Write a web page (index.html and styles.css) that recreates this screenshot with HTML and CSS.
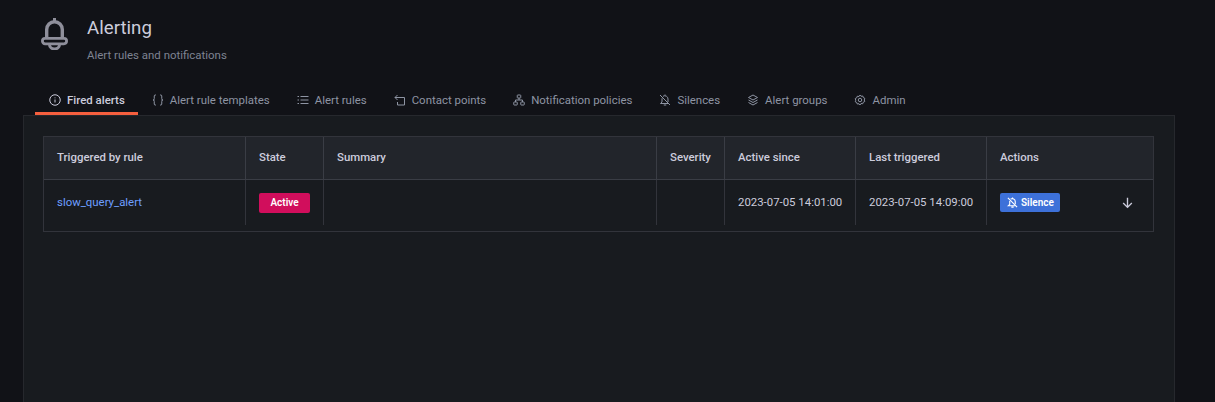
FILE: index.html
```html
<!DOCTYPE html>
<html lang="en">

<head>
    <meta charset="utf-8">
    <title>Alerting</title>
    <link rel="stylesheet" href="styles.css">
</head>

<body>
    <header class="page-head">
        <svg class="head-icon" viewBox="0 0 27 32" fill="none" stroke="currentColor">
            <path d="M13.500 0v4" stroke-width="3" />
            <path d="M5.700 21V11.500a7.800 7.800 0 0 1 15.600 0V21" stroke-width="3.400" />
            <rect x="1.400" y="20.400" width="24.200" height="5.400" rx="2.700" stroke-width="2.800" />
            <path d="M8.500 26.500a5 4.500 0 0 0 10 0" stroke-width="3" />
        </svg>
        <div class="head-text">
            <h1>Alerting</h1>
            <p>Alert rules and notifications</p>
        </div>
    </header>

    <nav class="tabs">
        <a class="tab active">
            <svg class="tab-icon" viewBox="0 0 24 24" fill="none" stroke="currentColor" stroke-width="2">
                <circle cx="12" cy="12" r="10.500" />
                <path d="M12 11v6M12 7v1.500" />
            </svg>
            Fired alerts
        </a>
        <a class="tab">
            <svg class="tab-icon" viewBox="0 0 24 24" fill="none" stroke="currentColor" stroke-width="2">
                <path d="M8 2H6.500a2 2 0 0 0-2 2v5a2.500 2.500 0 0 1-2.500 3 2.500 2.500 0 0 1 2.500 3v5a2 2 0 0 0 2 2H8" />
                <path d="M16 2h1.500a2 2 0 0 1 2 2v5a2.500 2.500 0 0 0 2.500 3 2.500 2.500 0 0 0-2.500 3v5a2 2 0 0 1-2 2H16" />
            </svg>
            Alert rule templates
        </a>
        <a class="tab">
            <svg class="tab-icon" viewBox="0 0 24 24" fill="none" stroke="currentColor" stroke-width="2">
                <path d="M7 5h16M7 12h16M7 19h16M1 5h3M1 12h3M1 19h3" />
            </svg>
            Alert rules
        </a>
        <a class="tab">
            <svg class="tab-icon" viewBox="0 0 24 24" fill="none" stroke="currentColor" stroke-width="2">
                <path d="M7 2L2 7l5 5" />
                <path d="M2 7h19v15H7v-6" />
            </svg>
            Contact points
        </a>
        <a class="tab">
            <svg class="tab-icon" viewBox="0 0 24 24" fill="none" stroke="currentColor" stroke-width="2">
                <rect x="8.500" y="2" width="7" height="6" rx="1" />
                <rect x="1.500" y="16" width="7" height="6" rx="1" />
                <rect x="15.500" y="16" width="7" height="6" rx="1" />
                <path d="M12 8v4M5 16v-4h14v4" />
            </svg>
            Notification policies
        </a>
        <a class="tab">
            <svg class="tab-icon" viewBox="0 0 24 24" fill="none" stroke="currentColor" stroke-width="2">
                <path d="M2 2l20 20" />
                <path d="M8 4.500A6.500 6.500 0 0 1 18 10v6M6 8.500V16l-3 3h15M9.500 22h5M12 1v2" />
            </svg>
            Silences
        </a>
        <a class="tab">
            <svg class="tab-icon" viewBox="0 0 24 24" fill="none" stroke="currentColor" stroke-width="2">
                <path d="M12 2l9 5-9 5-9-5z" />
                <path d="M3 12l9 5 9-5M3 17l9 5 9-5" />
            </svg>
            Alert groups
        </a>
        <a class="tab">
            <svg class="tab-icon" viewBox="0 0 24 24" fill="none" stroke="currentColor" stroke-width="2">
                <circle cx="12" cy="12" r="3.500" />
                <path d="M12 2l2 2.500 3.500-.5 1 3 3 1.500-1 3.500 1 3-3 1.500-1 3-3.500-.5L12 22l-2-2.500-3.500.5-1-3-3-1.500 1-3-1-3.500 3-1.500 1-3 3.500.5z" />
            </svg>
            Admin
        </a>
    </nav>

    <main class="panel">
        <div class="alerts">
            <div class="row head-row">
                <div class="cell">Triggered by rule</div>
                <div class="cell">State</div>
                <div class="cell">Summary</div>
                <div class="cell">Severity</div>
                <div class="cell">Active since</div>
                <div class="cell">Last triggered</div>
                <div class="cell last">Actions</div>
            </div>
            <div class="row body-row">
                <div class="cell text-cell"><a class="rule-link">slow_query_alert</a></div>
                <div class="cell"><span class="badge">Active</span></div>
                <div class="cell"></div>
                <div class="cell"></div>
                <div class="cell text-cell">2023-07-05 14:01:00</div>
                <div class="cell text-cell">2023-07-05 14:09:00</div>
                <div class="cell last actions">
                    <button class="silence">
                        <svg viewBox="0 0 24 24" fill="none" stroke="currentColor" stroke-width="2.500">
                            <path d="M2 2l20 20" />
                            <path d="M8 4.500A6.500 6.500 0 0 1 18 10v6M6 8.500V16l-3 3h15M9.500 22h5M12 1v2" />
                        </svg>
                        Silence
                    </button>
                    <svg class="arrow" viewBox="0 0 24 24" fill="none" stroke="currentColor" stroke-width="2.500">
                        <path d="M12 3v18M4 13l8 8 8-8" />
                    </svg>
                </div>
            </div>
        </div>
    </main>
</body>

</html>
```

FILE: styles.css
```css
html,
body {
    height: 100%;
}

body {
    margin: 0;
    background-color: #111217;
    color: #ccccdc;
    font-family: Roboto, sans-serif;
    font-size: 11.4px;
    overflow: hidden;
}

.page-head {
    display: flex;
    height: 87px;
    padding: 18px 0 0 41px;
    box-sizing: border-box;
}

.head-icon {
    width: 27px;
    height: 32px;
    color: #8f8f9b;
}

.head-text {
    margin-top: -2px;
    margin-left: 19px;
}

h1 {
    margin: 0;
    font-size: 18.700px;
    font-weight: 400;
    line-height: 24px;
    color: #ccccdc;
}

.head-text p {
    margin: 7px 0 0;
    font-size: 11.450px;
    line-height: 16px;
    color: #7e8392;
}

.tabs {
    display: flex;
    height: 28px;
    margin-left: 35px;
}

.tab {
    display: flex;
    align-items: center;
    gap: 6px;
    height: 26px;
    padding: 0 13px;
    color: #8e94a3;
    font-size: 11.450px;
    line-height: 16px;
}

.tab.active {
    color: #ccccdc;
    font-weight: 500;
    box-shadow: inset 0 -3px 0 0 #f55f3e;
    height: 28px;
    padding-bottom: 2px;
    box-sizing: border-box;
}

.tab-icon {
    width: 12px;
    height: 12px;
    margin-left: 1px;
}

.panel {
    height: 288px;
    margin: 0 40px 0 23px;
    padding: 20px 20px 0 19px;
    background-color: #181b1f;
    border: 1px solid rgba(204, 204, 220, 0.08);
    border-bottom: 0;
    box-sizing: border-box;
}

.alerts {
    border: 1px solid rgba(204, 204, 220, 0.15);
}

.row {
    display: grid;
    grid-template-columns: 202px 78px 333px 68px 131px 131px 1fr;
}

.head-row {
    height: 42px;
    background-color: #22252b;
    border-bottom: 1px solid rgba(204, 204, 220, 0.15);
    font-weight: 500;
    color: #ccccdc;
}

.head-row .cell {
    padding-bottom: 3px;
}

.body-row {
    height: 45px;
    margin-bottom: 6px;
}

.cell {
    display: flex;
    align-items: center;
    padding: 0 13px;
    border-right: 1px solid rgba(204, 204, 220, 0.15);
    white-space: nowrap;
}

.cell.text-cell {
    padding-bottom: 1px;
}

.cell.last {
    border-right: 0;
}

.rule-link {
    color: #6e9fff;
}

.badge {
    display: block;
    width: 51px;
    height: 20px;
    background-color: #d10e5c;
    border-radius: 2px;
    color: #fff;
    font-size: 10px;
    font-weight: 600;
    line-height: 20px;
    text-align: center;
}

.actions {
    justify-content: space-between;
    padding-right: 19px;
}

.silence {
    display: flex;
    align-items: center;
    gap: 3px;
    width: 60px;
    height: 19px;
    padding: 0 0 0 7px;
    background-color: #3d71d9;
    border: 0;
    border-radius: 2px;
    color: #fff;
    font-family: Roboto, sans-serif;
    font-size: 10px;
    font-weight: 600;
}

.silence svg {
    width: 11px;
    height: 11px;
}

.arrow {
    width: 13px;
    height: 13px;
}
```
